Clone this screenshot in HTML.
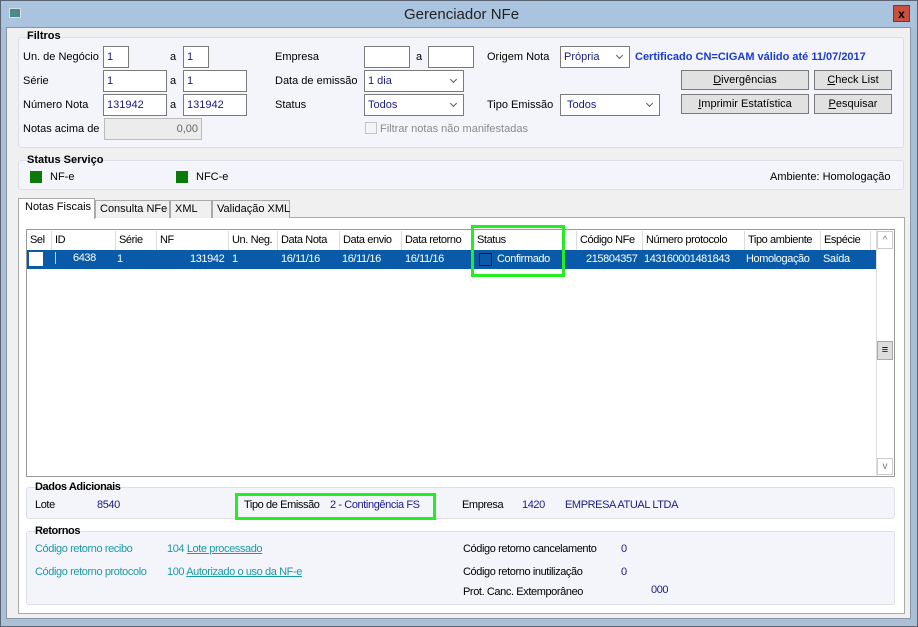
<!DOCTYPE html>
<html><head><meta charset="utf-8"><style>
*{box-sizing:border-box;margin:0;padding:0}
body{width:918px;height:627px;overflow:hidden;background:#aabfd8;font-family:"Liberation Sans",sans-serif;font-size:11px;color:#000;position:relative}
.a,.tab,.hd,.rw,.in,.btn{white-space:nowrap}
.a{position:absolute}
.win{position:absolute;left:0;top:0;width:918px;height:627px;border:1px solid #5a6472;}
.title{position:absolute;left:1px;top:1px;width:914px;height:26px;background:#aac4e0}
.client{position:absolute;left:6px;top:27px;width:905px;height:592px;background:#f0f0f0;border:1px solid #8a95a4}
.grp{position:absolute;background:#f4f5fa;border:1px solid #dcdfe6;border-radius:3px}
.gt{font-weight:bold;font-size:11px}
.in{position:absolute;background:#fff;border:1px solid #7a7a7a;height:22px;padding:4px 3px;color:#1a1a8a;overflow:hidden}
.sel::after{content:"";position:absolute;right:7px;top:6px;width:4px;height:4px;border-right:1.3px solid #555;border-bottom:1.3px solid #555;transform:rotate(45deg)}
.btn{position:absolute;background:#e1e1e1;border:1px solid #7a7a7a;height:20px;text-align:center;line-height:18px}
.g{font-size:11px;letter-spacing:-0.4px}
.hd{position:absolute;top:231px;height:19px;line-height:18px;border-right:1px solid #ddd;padding-left:3px;overflow:hidden}
.rw{position:absolute;top:251px;height:18px;line-height:17px;color:#fff}
.tab{position:absolute;top:200px;height:18px;border:1px solid #aaa;border-bottom:none;background:#f0f0f0;line-height:16px;padding:0 4px}
.teal{color:#1a9aa6}
.nv{color:#1a1a8a}
</style></head><body>
<div class="win"></div>
<div class="title"></div>
<div class="a" style="left:9px;top:8px;width:12px;height:10px;background:#4a8a8a;border:1px solid #ddd"></div>
<div class="a" style="left:404px;top:6px;font-size:15px;color:#222">Gerenciador NFe</div>
<div class="a" style="left:893px;top:5px;width:17px;height:17px;background:#c8503c;color:#000;font-weight:bold;text-align:center;line-height:16px;font-size:12px;border:1px solid #8a3020">x</div>
<div class="client"></div>

<div class="grp" style="left:18px;top:37px;width:886px;height:111px"></div>
<div class="a gt" style="left:27px;top:30px">Filtros</div>
<div class="a" style="left:23px;top:51px">Un. de Negócio</div>
<div class="in" style="left:103px;top:46px;width:26px">1</div>
<div class="a" style="left:170px;top:51px">a</div>
<div class="in" style="left:183px;top:46px;width:26px">1</div>
<div class="a" style="left:23px;top:75px">Série</div>
<div class="in" style="left:103px;top:70px;width:64px">1</div>
<div class="a" style="left:170px;top:75px">a</div>
<div class="in" style="left:183px;top:70px;width:64px">1</div>
<div class="a" style="left:23px;top:99px">Número Nota</div>
<div class="in" style="left:103px;top:94px;width:64px">131942</div>
<div class="a" style="left:170px;top:99px">a</div>
<div class="in" style="left:183px;top:94px;width:64px">131942</div>
<div class="a" style="left:23px;top:123px">Notas acima de</div>
<div class="in" style="left:104px;top:118px;width:98px;background:#ececec;border-color:#bbb;color:#666;text-align:right">0,00</div>
<div class="a" style="left:275px;top:51px">Empresa</div>
<div class="in" style="left:364px;top:46px;width:46px"></div>
<div class="a" style="left:416px;top:51px">a</div>
<div class="in" style="left:428px;top:46px;width:46px"></div>
<div class="a" style="left:275px;top:75px">Data de emissão</div>
<div class="in sel" style="left:364px;top:70px;width:100px">1 dia</div>
<div class="a" style="left:275px;top:99px">Status</div>
<div class="in sel" style="left:364px;top:94px;width:100px">Todos</div>
<div class="a" style="left:365px;top:122px;width:12px;height:12px;border:1px solid #c4c4c4;background:#f4f4f4"></div>
<div class="a" style="left:380px;top:123px;color:#8a8a8a">Filtrar notas não manifestadas</div>
<div class="a" style="left:487px;top:51px">Origem Nota</div>
<div class="in sel" style="left:560px;top:46px;width:70px">Própria</div>
<div class="a" style="left:635px;top:51px;color:#1a3ad8;font-weight:bold">Certificado CN=CIGAM válido até 11/07/2017</div>
<div class="a" style="left:487px;top:99px">Tipo Emissão</div>
<div class="in sel" style="left:560px;top:94px;width:100px">&nbsp;Todos</div>
<div class="btn" style="left:681px;top:70px;width:128px"><u>D</u>ivergências</div>
<div class="btn" style="left:814px;top:70px;width:78px"><u>C</u>heck List</div>
<div class="btn" style="left:681px;top:94px;width:128px"><u>I</u>mprimir Estatística</div>
<div class="btn" style="left:814px;top:94px;width:78px"><u>P</u>esquisar</div>

<div class="grp" style="left:18px;top:160px;width:886px;height:30px"></div>
<div class="a gt" style="left:27px;top:154px">Status Serviço</div>
<div class="a" style="left:30px;top:171px;width:12px;height:12px;background:#0a7a0a"></div>
<div class="a" style="left:50px;top:171px">NF-e</div>
<div class="a" style="left:176px;top:171px;width:12px;height:12px;background:#0a7a0a"></div>
<div class="a" style="left:196px;top:171px">NFC-e</div>
<div class="a" style="left:770px;top:171px">Ambiente: Homologação</div>

<div class="a" style="left:18px;top:217px;width:887px;height:397px;background:#fff;border:1px solid #aaa"></div>
<div class="tab" style="left:95px;width:75px">Consulta NFe</div>
<div class="tab" style="left:170px;width:42px">XML</div>
<div class="tab" style="left:212px;width:78px">Validação XML</div>
<div class="tab" style="left:18px;top:198px;width:77px;height:21px;background:#fff;padding-left:6px">Notas Fiscais</div>

<div class="a" style="left:26px;top:229px;width:869px;height:248px;border:1px solid #999;background:#fff"></div>
<div class="g">
<div class="hd" style="left:27px;width:25px">Sel</div>
<div class="hd" style="left:52px;width:64px">ID</div>
<div class="hd" style="left:116px;width:41px">Série</div>
<div class="hd" style="left:157px;width:72px">NF</div>
<div class="hd" style="left:229px;width:49px">Un. Neg.</div>
<div class="hd" style="left:278px;width:62px">Data Nota</div>
<div class="hd" style="left:340px;width:62px">Data envio</div>
<div class="hd" style="left:402px;width:72px">Data retorno</div>
<div class="hd" style="left:474px;width:103px">Status</div>
<div class="hd" style="left:577px;width:66px">Código NFe</div>
<div class="hd" style="left:643px;width:102px">Número protocolo</div>
<div class="hd" style="left:745px;width:76px">Tipo ambiente</div>
<div class="hd" style="left:821px;width:50px">Espécie</div>
<div class="a" style="left:27px;top:250px;width:849px;height:19px;background:#0a5aaa"></div>
<div class="a" style="left:29px;top:252px;width:14px;height:14px;background:#fff"></div>
<div class="a" style="left:55px;top:252px;width:1px;height:12px;background:#ccc"></div>
<div class="rw" style="left:73px;top:250px">6438</div>
<div class="rw" style="left:117px">1</div>
<div class="rw" style="left:190px">131942</div>
<div class="rw" style="left:232px">1</div>
<div class="rw" style="left:281px">16/11/16</div>
<div class="rw" style="left:342px">16/11/16</div>
<div class="rw" style="left:405px">16/11/16</div>
<div class="a" style="left:479px;top:253px;width:13px;height:13px;border:1px solid #001a3a"></div>
<div class="rw" style="left:497px">Confirmado</div>
<div class="rw" style="left:586px">215804357</div>
<div class="rw" style="left:644px">143160001481843</div>
<div class="rw" style="left:746px">Homologação</div>
<div class="rw" style="left:823px">Saída</div>
</div>
<div class="a" style="left:876px;top:230px;width:18px;height:246px;background:#fff;border-left:1px solid #ddd"></div>
<div class="a" style="left:877px;top:231px;width:16px;height:18px;border:1px solid #ccc;text-align:center;color:#777;font-size:10px;line-height:18px">^</div>
<div class="a" style="left:877px;top:341px;width:16px;height:19px;border:1px solid #aaa;background:#ddd;text-align:center;font-size:11px;line-height:17px">≡</div>
<div class="a" style="left:877px;top:458px;width:16px;height:17px;border:1px solid #ccc;text-align:center;color:#777;font-size:10px;line-height:15px">v</div>
<div class="a" style="left:471px;top:225px;width:94px;height:52px;border:3px solid #22ee22"></div>

<div class="g">
<div class="grp" style="left:26px;top:487px;width:869px;height:32px"></div>
<div class="a gt" style="left:35px;top:481px">Dados Adicionais</div>
<div class="a" style="left:35px;top:499px">Lote</div>
<div class="a nv" style="left:97px;top:499px">8540</div>
<div class="a" style="left:244px;top:499px">Tipo de Emissão</div>
<div class="a nv" style="left:330px;top:499px">2 - Contingência FS</div>
<div class="a" style="left:462px;top:499px">Empresa</div>
<div class="a nv" style="left:522px;top:499px">1420</div>
<div class="a nv" style="left:565px;top:499px">EMPRESA ATUAL LTDA</div>
<div class="a" style="left:235px;top:493px;width:201px;height:27px;border:3px solid #22ee22"></div>

<div class="grp" style="left:26px;top:531px;width:869px;height:74px"></div>
<div class="a gt" style="left:35px;top:525px">Retornos</div>
<div class="a teal" style="left:35px;top:543px">Código retorno recibo</div>
<div class="a teal" style="left:167px;top:543px">104 <u>Lote processado</u></div>
<div class="a teal" style="left:35px;top:566px">Código retorno protocolo</div>
<div class="a teal" style="left:167px;top:566px">100 <u>Autorizado o uso da NF-e</u></div>
<div class="a" style="left:463px;top:543px">Código retorno cancelamento</div>
<div class="a nv" style="left:621px;top:543px">0</div>
<div class="a" style="left:463px;top:566px">Código retorno inutilização</div>
<div class="a nv" style="left:621px;top:566px">0</div>
<div class="a" style="left:463px;top:586px">Prot. Canc. Extemporâneo</div>
<div class="a nv" style="left:651px;top:584px">000</div>
</div>
</body></html>
